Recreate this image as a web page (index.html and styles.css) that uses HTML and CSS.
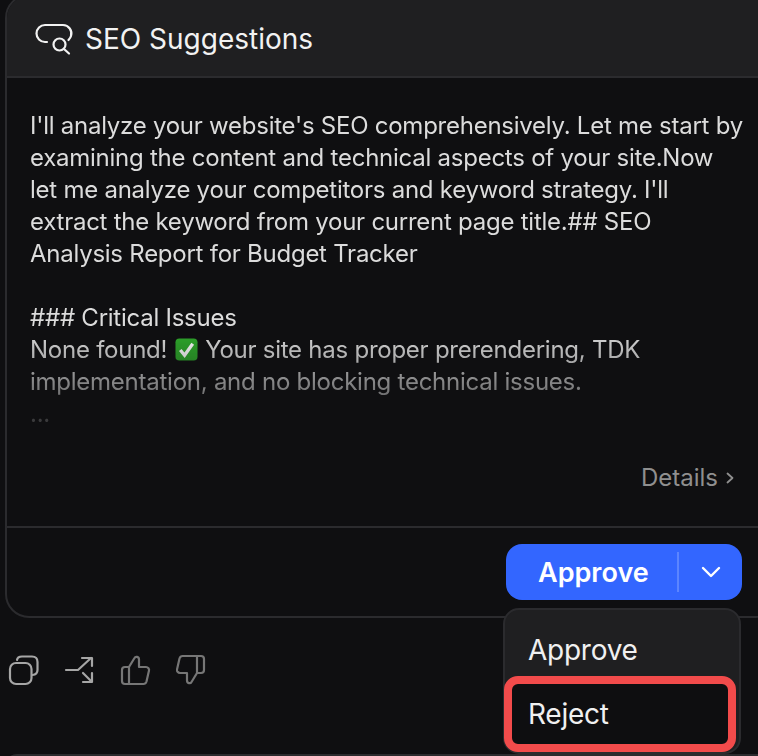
FILE: index.html
```html
<!DOCTYPE html>
<html lang="en">
<head>
  <meta charset="UTF-8">
  <title>SEO Suggestions</title>
  <link rel="stylesheet" href="styles.css">
</head>
<body>

<div class="card">
  <div class="card-header">
    <svg class="header-icon" viewBox="34 22 40 34" fill="none" stroke="currentColor" stroke-width="2.2" stroke-linecap="round" stroke-linejoin="round">
      <path d="M47 42 H45 a8.500 8.500 0 0 1 0-17 H63 a8.500 8.500 0 0 1 8 11 q-.6 2-2.500 4"/>
      <circle cx="59.500" cy="44.500" r="6"/>
      <path d="M64 49 L69 53.500"/>
    </svg>
    <span>SEO Suggestions</span>
  </div>

  <div class="card-body">
    <div class="summary">
      <p>I'll analyze your website's SEO comprehensively. Let me start by examining the content and technical aspects of your site.Now let me analyze your competitors and keyword strategy. I'll extract the keyword from your current page title.## SEO Analysis Report for Budget Tracker</p>
      <p>### Critical Issues<br>
      None found!
      <svg class="check" viewBox="0 0 24 24" role="img" aria-label="check mark">
        <rect x="0.500" y="0.500" width="23" height="23" rx="4" fill="#2ea82b"/>
        <path d="M5.500 12.500 L10 18 L18.500 6" fill="none" stroke="#fff" stroke-width="3.400"/>
      </svg>
      Your site has proper prerendering, TDK implementation, and no blocking technical issues.<br>
      <span class="more">...</span></p>
    </div>
    <div class="details">
      Details
      <svg viewBox="0 0 10 14" fill="none" stroke="currentColor" stroke-width="1.800" stroke-linecap="round" stroke-linejoin="round">
        <path d="M2.500 2.500 L7.500 7 L2.500 11.500"/>
      </svg>
    </div>
  </div>

  <div class="card-footer">
    <div class="split-button">
      <div class="split-main">Approve</div>
      <div class="split-arrow">
        <svg viewBox="0 0 20 12" fill="none" stroke="currentColor" stroke-width="2.400" stroke-linecap="round" stroke-linejoin="round">
          <path d="M2 2 L10 10 L18 2"/>
        </svg>
      </div>
      <div class="menu">
        <div class="menu-item">Approve</div>
        <div class="menu-item selected">Reject</div>
      </div>
    </div>
  </div>
</div>

<div class="actions">
  <svg class="bright" viewBox="8 654 32 32" fill="none" stroke="currentColor" stroke-width="2.200" stroke-linejoin="round" stroke-linecap="round">
    <rect x="10" y="663" width="21.500" height="21" rx="6"/>
    <path d="M17 660 q.5-3.500 5-3.500 h10 q5.500 0 5.500 5.500 v8 q0 4.500-5 5"/>
  </svg>
  <svg class="bright" viewBox="64 654 32 32" fill="none" stroke="currentColor" stroke-width="2.200" stroke-linejoin="round" stroke-linecap="round">
    <path d="M66 670 H78 L91 658"/>
    <path d="M82 658 H92 V666"/>
    <path d="M83 673 L91 681"/>
    <path d="M83 682 H92 V673"/>
  </svg>
  <svg class="dim" viewBox="121 654 32 32" fill="none" stroke="currentColor" stroke-width="2.200" stroke-linejoin="round" stroke-linecap="round">
    <path d="M130 667 l5.500-9 c1-2 4.500-1.500 4.500 1.500 v7.500 h7 c2 0 3.500 2 3 3.500 l-2.500 11 c-.5 1.500-1.500 2.500-3 2.500 H126 c-2 0-3-1-3-3 v-11 c0-2 1-3 3-3 h4 v17"/>
  </svg>
  <svg class="dim" viewBox="176 654 32 32" fill="none" stroke="currentColor" stroke-width="2.200" stroke-linejoin="round" stroke-linecap="round">
    <path transform="rotate(180 192 670)" d="M187 667 l5.500-9 c1-2 4.500-1.500 4.500 1.500 v7.500 h7 c2 0 3.500 2 3 3.500 l-2.500 11 c-.5 1.500-1.500 2.500-3 2.500 H183 c-2 0-3-1-3-3 v-11 c0-2 1-3 3-3 h4 v17"/>
  </svg>
</div>

<div class="next-card"></div>

</body>
</html>
```

FILE: styles.css
```css
* {
  box-sizing: border-box;
  margin: 0;
  padding: 0;
}

html, body {
  height: 100%;
}

body {
  font-family: 'Inter', 'Liberation Sans', sans-serif;
  background: #0f0f11;
  color: #f0f0f0;
  overflow: hidden;
}

.card {
  position: relative;
  z-index: 1;
  margin: -6px -20px 0 5px;
  border: 2px solid #2b2b2e;
  border-radius: 24px;
}

.card-header {
  display: flex;
  align-items: center;
  gap: 11px;
  height: 82px;
  padding: 6px 0 0 27px;
  background: #1f1f21;
  border-bottom: 2px solid #2b2b2e;
  border-radius: 22px 22px 0 0;
  font-size: 28px;
  color: #f2f2f2;
}

.header-icon {
  width: 40px;
  height: 34px;
}

.card-body {
  height: 450px;
  padding: 32px 40px 0 23px;
  border-bottom: 2px solid #2b2b2e;
}

.summary {
  width: 713px;
  font-size: 24px;
  line-height: 32px;
  letter-spacing: -0.25px;
  color: #dcdcdc;
  -webkit-mask-image: linear-gradient(180deg, #000 0, #000 220px, rgba(0, 0, 0, 0.2) 320px);
  mask-image: linear-gradient(180deg, #000 0, #000 220px, rgba(0, 0, 0, 0.2) 320px);
}

.summary p + p {
  margin-top: 32px;
}

.check {
  width: 23px;
  height: 23px;
  vertical-align: -3px;
  margin: 0 1px;
}

.more {
  color: #b0b0b0;
}

.details {
  display: flex;
  align-items: center;
  justify-content: flex-end;
  gap: 7px;
  margin-top: 32px;
  width: 705px;
  font-size: 24px;
  line-height: 32px;
  color: #8f8f8f;
}

.details svg {
  width: 10px;
  height: 14px;
}

.card-footer {
  display: flex;
  height: 88px;
  padding: 16px 0 0 499px;
}

.split-button {
  position: relative;
  display: flex;
  align-items: center;
  width: 236px;
  height: 56px;
  background: #3366ff;
  border-radius: 16px;
  color: #fff;
}

.split-main {
  flex: 1;
  padding-left: 32px;
  font-size: 27px;
  font-weight: 600;
}

.split-arrow {
  display: flex;
  align-items: center;
  justify-content: center;
  width: 65px;
  height: 40px;
  border-left: 2px solid #5c85ff;
}

.split-arrow svg {
  width: 20px;
  height: 12px;
}

.menu {
  position: absolute;
  top: 64px;
  left: -3px;
  width: 238px;
  height: 146px;
  padding: 4px 2px 0;
  background: #1f1f21;
  border: 2px solid #2b2b2e;
  border-radius: 16px;
  font-size: 28px;
  letter-spacing: -0.25px;
  color: #f0f0f0;
}

.menu-item {
  height: 62px;
  padding-left: 21px;
  line-height: 72px;
}

.menu-item.selected {
  width: 232px;
  height: 76px;
  margin-left: -3px;
  padding-left: 16px;
  line-height: 60px;
  background: #0e0e10;
  border: 8px solid #f24b4b;
  border-radius: 14px;
}

.actions {
  display: flex;
  margin: 36px 0 0 8px;
}

.actions svg {
  width: 32px;
  height: 32px;
  margin-right: 24px;
}

.bright {
  color: #a6a6a6;
}

.dim {
  color: #767676;
}

.next-card {
  margin: 68px -20px 0 5px;
  height: 20px;
  border: 2px solid #2b2b2e;
  border-radius: 12px 12px 0 0;
}
```
